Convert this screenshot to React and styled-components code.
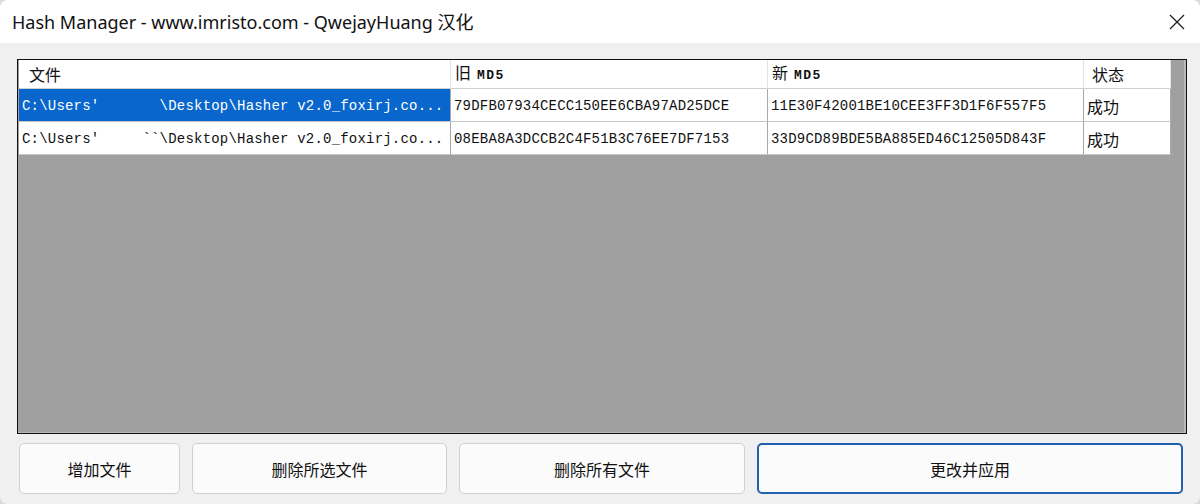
import React from "react";
import styled, { createGlobalStyle } from "styled-components";

const GlobalStyle = createGlobalStyle`
  html, body {
    margin: 0;
    padding: 0;
    background: #dcdcdc;
  }
  body {
    font-family: "Noto Sans", "Noto Sans CJK SC", sans-serif;
  }
`;

const Window = styled.div`
  width: 1200px;
  height: 504px;
  display: flex;
  flex-direction: column;
  background: #f0f0f0;
  border-radius: 8px;
  overflow: hidden;
  box-sizing: border-box;
`;

const TitleBar = styled.div`
  height: 43px;
  flex-shrink: 0;
  display: flex;
  align-items: center;
  justify-content: space-between;
  background: #ffffff;
  padding: 0 14px 0 12px;
`;

const Title = styled.div`
  font-family: "Noto Sans", "Noto Sans CJK SC", sans-serif;
  font-size: 18px;
  color: #111;
  padding-bottom: 1px;
`;

const CloseButton = styled.div`
  width: 18px;
  height: 18px;
  display: flex;
  align-items: center;
  justify-content: center;
`;

const Body = styled.div`
  flex: 1;
  display: flex;
  flex-direction: column;
  gap: 9px;
  padding: 16px 13px 10px 17px;
  min-height: 0;
`;

const ListBox = styled.div`
  flex: 1;
  background: #a0a0a0;
  border: 1px solid #111;
  padding: 0 0 0 1px;
  box-shadow: inset -2px -1px 0 #b8b8b8;
`;

const Grid = styled.div`
  width: 1152px;
`;

const Row = styled.div`
  display: grid;
  grid-template-columns: 432px 317px 316px 87px;
  height: ${(p) => (p.header ? "29px" : "33px")};
`;

const HeaderCell = styled.div`
  background: #ffffff;
  border-right: 1px solid #e3e3e3;
  border-bottom: 1px solid #cfcfcf;
  display: flex;
  align-items: center;
  padding-left: ${(p) => p.pad || 4}px;
  font-family: "Noto Sans CJK SC", sans-serif;
  font-size: 16px;
  color: #111;
  white-space: pre;
`;

const HeaderLabel = styled.span`
  display: inline-block;
  line-height: 20px;
`;

const Tag = styled.span`
  font-family: "Liberation Mono", monospace;
  font-size: 13px;
  font-weight: bold;
  letter-spacing: 1.5px;
  margin-left: 6px;
`;

const Cell = styled.div`
  background: ${(p) => (p.selected ? "#0866cc" : "#ffffff")};
  color: ${(p) => (p.selected ? "#ffffff" : "#111")};
  border-right: 1px solid #a9a9a9;
  border-bottom: 1px solid #c6c6c6;
  display: flex;
  align-items: center;
  padding-left: 3px;
  padding-top: 1px;
  overflow: hidden;
  white-space: pre;
  font-family: ${(p) =>
    p.cjk ? `"Noto Sans CJK SC", sans-serif` : `"Liberation Mono", monospace`};
  font-size: ${(p) => (p.cjk ? "16px" : "14px")};
  letter-spacing: ${(p) => (p.cjk ? "0" : "0.2px")};
`;

const ButtonRow = styled.div`
  display: flex;
  gap: 12px;
  padding: 0 4px 0 2px;
  height: 51px;
  flex-shrink: 0;
`;

const Button = styled.button`
  width: ${(p) => p.w}px;
  flex-shrink: 0;
  flex-grow: ${(p) => (p.grow ? 1 : 0)};
  height: 100%;
  background: #fbfbfb;
  border: ${(p) => (p.primary ? "2px solid #2261ad" : "1px solid #d0d0d0")};
  border-radius: 5px;
  font-family: "Noto Sans CJK SC", sans-serif;
  font-size: 16px;
  color: #111;
  cursor: pointer;
  padding: 0;
`;

const rows = [
  {
    file: "C:\\Users'       \\Desktop\\Hasher v2.0_foxirj.co...",
    oldMd5: "79DFB07934CECC150EE6CBA97AD25DCE",
    newMd5: "11E30F42001BE10CEE3FF3D1F6F557F5",
    status: "成功",
    selected: true,
  },
  {
    file: "C:\\Users'     ``\\Desktop\\Hasher v2.0_foxirj.co...",
    oldMd5: "08EBA8A3DCCB2C4F51B3C76EE7DF7153",
    newMd5: "33D9CD89BDE5BA885ED46C12505D843F",
    status: "成功",
    selected: false,
  },
];

const App = () => {
  return (
    <>
      <GlobalStyle />
      <Window>
        <TitleBar>
          <Title>Hash Manager - www.imristo.com - QwejayHuang 汉化</Title>
          <CloseButton>
            <svg width="16" height="16" viewBox="0 0 16 16">
              <path d="M1 1L15 15M15 1L1 15" stroke="#1a1a1a" strokeWidth="1.2" />
            </svg>
          </CloseButton>
        </TitleBar>
        <Body>
          <ListBox>
            <Grid>
              <Row header>
                <HeaderCell pad={10}>
                  <HeaderLabel>文件</HeaderLabel>
                </HeaderCell>
                <HeaderCell>
                  <HeaderLabel>
                    旧<Tag>MD5</Tag>
                  </HeaderLabel>
                </HeaderCell>
                <HeaderCell>
                  <HeaderLabel>
                    新<Tag>MD5</Tag>
                  </HeaderLabel>
                </HeaderCell>
                <HeaderCell pad={8}>
                  <HeaderLabel>状态</HeaderLabel>
                </HeaderCell>
              </Row>
              {rows.map((r, i) => (
                <Row key={i}>
                  <Cell selected={r.selected}>{r.file}</Cell>
                  <Cell>{r.oldMd5}</Cell>
                  <Cell>{r.newMd5}</Cell>
                  <Cell cjk>{r.status}</Cell>
                </Row>
              ))}
            </Grid>
          </ListBox>
          <ButtonRow>
            <Button w={161}>增加文件</Button>
            <Button w={255}>删除所选文件</Button>
            <Button w={286}>删除所有文件</Button>
            <Button primary grow>
              更改并应用
            </Button>
          </ButtonRow>
        </Body>
      </Window>
    </>
  );
};

export default App;
